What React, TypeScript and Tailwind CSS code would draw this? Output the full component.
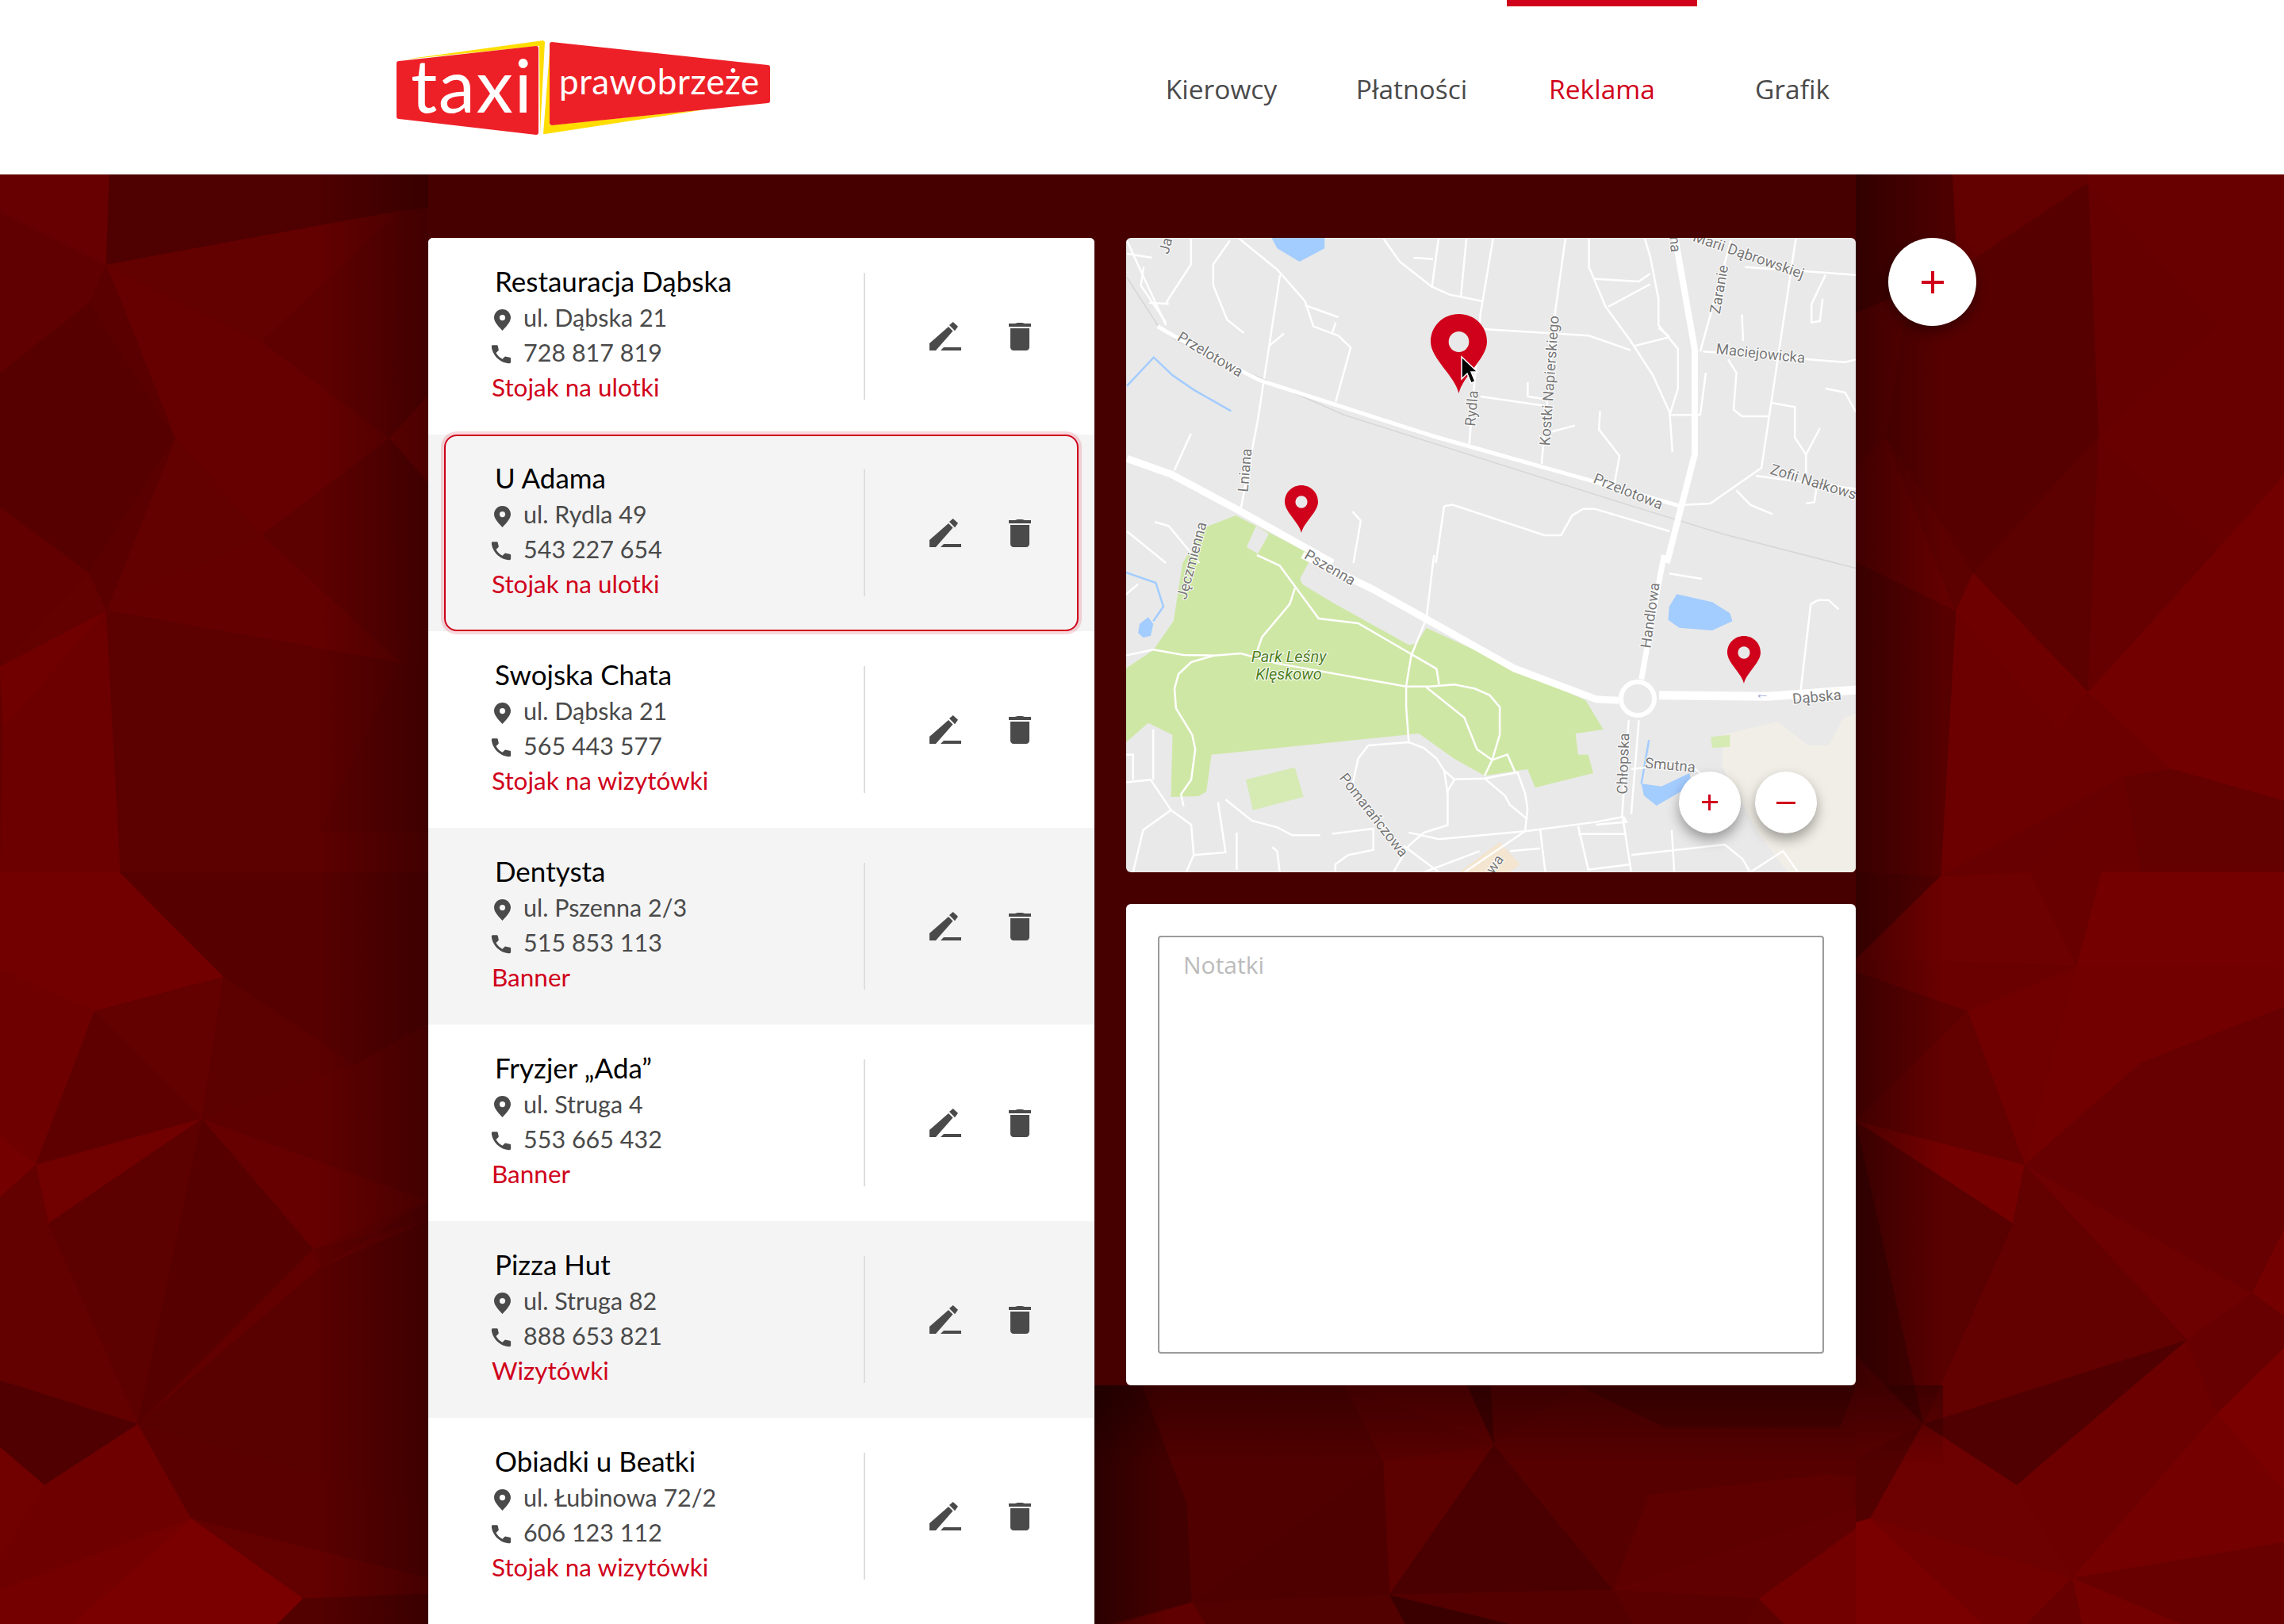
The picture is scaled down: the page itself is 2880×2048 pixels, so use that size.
const RED = "#d0021b";

type Place = { name: string; address: string; phone: string; tag: string };

const places: Place[] = [
  { name: "Restauracja Dąbska", address: "ul. Dąbska 21", phone: "728 817 819", tag: "Stojak na ulotki" },
  { name: "U Adama", address: "ul. Rydla 49", phone: "543 227 654", tag: "Stojak na ulotki" },
  { name: "Swojska Chata", address: "ul. Dąbska 21", phone: "565 443 577", tag: "Stojak na wizytówki" },
  { name: "Dentysta", address: "ul. Pszenna 2/3", phone: "515 853 113", tag: "Banner" },
  { name: "Fryzjer „Ada”", address: "ul. Struga 4", phone: "553 665 432", tag: "Banner" },
  { name: "Pizza Hut", address: "ul. Struga 82", phone: "888 653 821", tag: "Wizytówki" },
  { name: "Obiadki u Beatki", address: "ul. Łubinowa 72/2", phone: "606 123 112", tag: "Stojak na wizytówki" },
];

// low-poly backdrop, [fill, points] in page pixels
const facets: [string, string][] = [
  // top left
  ["#6a0000", "0,220 138,220 134,334 0,267"],
  ["#480000", "138,220 540,220 540,262 505,266 290,305 134,334"],
  ["#640000", "134,334 290,305 505,266 330,431"],
  ["#680000", "134,334 330,431 221,553"],
  ["#5e0000", "330,431 505,266 491,553"],
  ["#5c0000", "505,266 540,262 540,499 491,553"],
  ["#700000", "540,499 540,609 491,553"],
  ["#680000", "221,553 330,431 491,553 330,675"],
  ["#5c0000", "330,675 491,553 505,836"],
  ["#580000", "491,553 540,609 540,840 505,836"],
  ["#640000", "221,553 330,675 134,770"],
  ["#660000", "134,770 330,675 505,836"],
  ["#520000", "113,381 221,553 112,722 0,640 0,470"],
  ["#600000", "0,267 134,334 113,381 0,470"],
  ["#580000", "134,334 221,553 113,381"],
  ["#580000", "221,553 134,770 112,722"],
  ["#620000", "0,640 112,722 0,840"],
  ["#760000", "0,840 134,770 4,920"],
  ["#640000", "0,840 112,722 134,770"],
  ["#700000", "4,920 134,770 152,1100 0,1100"],
  ["#5a0000", "134,770 505,836 402,1050 152,1100"],
  ["#560000", "505,836 540,840 540,1050 402,1050"],
  ["#5c0000", "402,1050 540,1050 540,1100 152,1100"],
  // bottom left
  ["#7a0000", "0,1100 151,1100 282,1232 119,1275 0,1222"],
  ["#740000", "0,1222 119,1275 80,1378 45,1469 0,1433"],
  ["#640000", "119,1275 282,1232 255,1411"],
  ["#5e0000", "119,1275 255,1411 45,1469 80,1378"],
  ["#7c0000", "0,1433 45,1469 0,1510"],
  ["#780000", "45,1469 255,1411 61,1543"],
  ["#5a0000", "61,1543 255,1411 174,1796"],
  ["#520000", "255,1411 395,1575 174,1796"],
  ["#680000", "255,1411 540,1514 395,1575"],
  ["#5a0000", "282,1232 447,1343 255,1411"],
  ["#5e0000", "447,1343 540,1290 540,1514 255,1411"],
  ["#540000", "151,1100 540,1100 540,1290 447,1343 282,1232"],
  ["#5a0000", "395,1575 540,1540 540,1514 405,1598"],
  ["#560000", "405,1598 540,1540 540,1900 174,1796"],
  ["#640000", "0,1510 45,1469 61,1543 174,1796 0,1741"],
  ["#4a0000", "0,1741 174,1796 56,1873 0,1825"],
  ["#780000", "0,1825 56,1873 0,1965"],
  ["#740000", "56,1873 174,1796 241,1915 0,2005 0,1965"],
  ["#580000", "174,1796 540,1900 540,1990 241,1915"],
  ["#640000", "241,1915 540,1990 540,2010 382,2016"],
  ["#840000", "241,1915 382,2016 350,2048 90,2048"],
  ["#7c0000", "0,2005 241,1915 90,2048 0,2048"],
  ["#4e0000", "382,2016 540,2010 540,2048 350,2048"],
  // top right
  ["#440000", "2340,220 2462,220 2470,400 2340,395"],
  ["#640000", "2462,220 2633,220 2633,231 2470,340"],
  ["#6c0000", "2633,220 2880,220 2880,290 2796,411 2633,231"],
  ["#680000", "2633,231 2796,411 2646,552"],
  ["#540000", "2470,340 2633,231 2646,552 2378,551 2400,410"],
  ["#5c0000", "2340,395 2470,340 2400,410 2378,551 2340,590"],
  ["#540000", "2378,551 2646,552 2488,723"],
  ["#640000", "2340,590 2378,551 2466,771 2340,709"],
  ["#5a0000", "2378,551 2488,723 2466,771"],
  ["#5c0000", "2488,723 2646,552 2633,873"],
  ["#6c0000", "2646,552 2796,411 2880,290 2880,600 2796,693"],
  ["#680000", "2646,552 2796,693 2633,873"],
  ["#7a0000", "2796,693 2880,600 2880,820 2633,873"],
  ["#740000", "2466,771 2488,723 2633,873 2595,920"],
  ["#700000", "2466,771 2595,920 2447,1105"],
  ["#700000", "2595,920 2633,873 2738,970 2678,980 2447,1105"],
  ["#7a0000", "2633,873 2880,820 2880,1010 2738,970"],
  ["#520000", "2340,709 2466,771 2447,1105 2340,1100"],
  ["#6a0000", "2447,1105 2678,980 2560,1100"],
  ["#640000", "2678,980 2738,970 2880,1010 2880,1100 2700,1100"],
  ["#6c0000", "2560,1100 2678,980 2700,1100"],
  // bottom right
  ["#480000", "2340,1100 2447,1105 2340,1210"],
  ["#720000", "2447,1105 2560,1100 2619,1219 2340,1210"],
  ["#6c0000", "2560,1100 2650,1100 2619,1219"],
  ["#7c0000", "2650,1100 2880,1100 2880,1220 2619,1219"],
  ["#5a0000", "2340,1225 2481,1275 2340,1414"],
  ["#6e0000", "2340,1210 2619,1219 2481,1275 2340,1225"],
  ["#760000", "2481,1275 2619,1219 2553,1469"],
  ["#640000", "2481,1275 2553,1469 2340,1414"],
  ["#7a0000", "2619,1219 2880,1220 2880,1270 2700,1340 2553,1469"],
  ["#6a0000", "2700,1340 2880,1270 2880,1550 2840,1631 2553,1469"],
  ["#720000", "2553,1469 2840,1631 2758,1690"],
  ["#7c0000", "2340,1414 2553,1469 2538,1543"],
  ["#640000", "2553,1469 2758,1690 2538,1543"],
  ["#640000", "2538,1543 2758,1690 2425,1796"],
  ["#560000", "2340,1414 2538,1543 2425,1796"],
  ["#3e0000", "2340,1414 2425,1796 2340,1710"],
  ["#7c0000", "2840,1631 2880,1550 2880,1660"],
  ["#6a0000", "2758,1690 2840,1631 2880,1660 2880,1700 2795,1783"],
  ["#840000", "2795,1783 2880,1700 2880,1880"],
  ["#4a0000", "2425,1796 2758,1690 2543,1873"],
  ["#700000", "2543,1873 2758,1690 2795,1783 2613,1990"],
  ["#7c0000", "2613,1990 2795,1783 2880,1880 2880,1945"],
  ["#560000", "2340,1710 2425,1796 2340,1840"],
  ["#4e0000", "2340,1840 2425,1796 2358,1915 2340,1920"],
  ["#720000", "2425,1796 2543,1873 2613,1990 2358,1915"],
  ["#7a0000", "2358,1915 2613,1990 2555,2048 2500,2048"],
  ["#840000", "2340,1920 2358,1915 2500,2048 2340,2048"],
  ["#6c0000", "2613,1990 2880,1945 2880,2048 2750,2048"],
  ["#7c0000", "2613,1990 2750,2048 2625,2048"],
  ["#6a0000", "2555,2048 2613,1990 2625,2048"],
  // under the notes
  ["#3a0000", "1380,1747 1500,1747 1497,1897 1503,2021 1400,2048 1380,2048"],
  ["#4e0000", "1440,1747 1695,1747 1744,1843 1503,2021 1497,1897"],
  ["#580000", "1695,1747 1884,1822 1744,1843"],
  ["#380000", "1850,1747 1880,1747 1884,1822"],
  ["#520000", "1880,1747 1990,1747 1884,1822"],
  ["#5e0000", "1744,1843 1884,1822 1752,2011"],
  ["#4a0000", "1744,1843 1752,2011 1503,2021"],
  ["#440000", "1884,1822 2034,2005 1752,2011"],
  ["#560000", "1884,1822 1990,1747 2340,1747 2340,1862 2309,1859 2080,1885 2034,2005"],
  ["#420000", "1990,1747 2340,1747 2320,1800 2100,1800"],
  ["#600000", "2080,1885 2309,1859 2340,1900 2034,2005"],
  ["#640000", "2034,2005 2340,1900 2340,1928 2218,2016"],
  ["#7c0000", "2218,2016 2340,1928 2340,2048 2250,2048"],
  ["#500000", "1503,2021 1752,2011 1772,2048 1400,2048"],
  ["#2e0000", "1752,2011 1905,2048 1772,2048"],
  ["#520000", "1752,2011 2034,2005 2060,2048 1905,2048"],
  ["#5a0000", "2034,2005 2218,2016 2200,2048 2060,2048"],
  ["#620000", "1410,2048 1503,2021 1520,2048"],
];

// thin streets, traced off the north half of the map
const streetsNorth = [
  "M30 40 Q60 180 100 360", "M30 90 L75 105", "M60 140 L55 210 L100 350", "M145 30 L145 130 L105 260 L100 280", "M70 275 L105 280",
  "M230 30 L300 150 L350 270 L365 365 L410 400 L432 445 L405 650", "M215 40 L185 130 L185 210 L210 340 L240 390",
  "M305 170 L265 720 L235 1050", "M350 285 L410 330", "M405 350 L398 395", "M312 392 L285 440",
  "M490 30 L520 120 L578 215 L610 245 L670 270", "M545 105 L580 110", "M590 30 L578 215", "M640 30 L630 250", "M688 30 L665 320 L645 810",
  "M818 30 L800 300 L775 885", "M670 375 L860 400 L935 455", "M860 30 L860 140 L890 290 L935 420 L975 550 L1005 690 L1010 840",
  "M960 30 L970 100 L985 260 L985 360 L1020 450 L1020 600 L1005 700 L1060 700", "M870 185 L950 195 L970 165", "M970 205 L895 290",
  "M940 440 L1005 405", "M985 370 L1005 405", "M665 630 L780 665", "M750 575 L750 630 L780 640", "M790 765 L835 740",
  "M880 685 L878 755 L915 855 L905 970", "M1115 40 L1060 460", "M1140 140 L1340 170", "M1285 170 L1260 280 L1260 350 L1275 345 L1280 260",
  "M1135 320 L1137 420", "M1232 30 L1170 900 L1078 1035 L1030 1040", "M1065 460 L1320 500 L1340 490", "M1110 490 L1125 540 L1120 680 L1135 705 L1185 705",
  "M1285 600 L1320 615 L1340 690", "M1190 655 L1230 670 L1230 785 L1250 850 L1250 940", "M1275 750 L1250 850", "M1160 930 L1340 980",
  "M1125 985 L1150 1040 L1190 1075", "M1270 965 L1265 1030 L1250 1035", "M145 770 L115 910", "M80 1105 L105 1120 L160 1260", "M30 1140 L100 1260",
  "M600 1045 L585 1260", "M600 1045 L615 1040 L780 1155 L810 1155 L830 1080 L850 1055 L870 1055 L1005 1140", "M435 1065 L450 1100 L437 1260", "M1070 540 L1060 700",
];

// same for the south half
const streetsSouth = [
  "M290 0 L335 40 L412 240 L490 258 L645 430 L650 490", "M365 125 L355 185 L300 310 L290 365 L330 410 L585 497 L630 497 L680 490 L720 505 L750 530 L770 575 L770 680 L755 775 L740 835",
  "M85 358 L145 378 L205 380 L258 372 L330 410", "M205 380 L160 405 L135 450 L127 505 L130 580 L162 680 L168 735 L160 850 L140 905 L145 950",
  "M640 0 L625 240 L595 380 L585 495 L585 575 L590 705", "M625 500 L700 615 L725 735 L755 775 L785 755 L800 820",
  "M510 720 L590 708 L620 730 L645 770 L660 815 L680 848 L740 845 L805 822 L820 900 L825 960 L820 1045", "M510 720 L490 770 L480 860",
  "M660 815 L667 900 L667 1022 L620 1050 L590 1100 L560 1200", "M680 850 L665 900", "M740 845 L780 910 L790 945 L825 1000",
  "M30 860 L80 850 L120 965 L160 1020 L165 1135 L150 1200", "M120 965 L65 1040 L45 1200", "M30 755 L45 755 L45 850", "M85 660 L85 850",
  "M165 1135 L228 1125 L213 935", "M250 1050 L250 1190", "M320 1105 L330 1120 L335 1200", "M228 925 L280 1005 L330 1030 L360 1060 L415 1060",
  "M438 1055 L520 1035 L520 1115 L470 1135 L445 1170 L445 1200", "M580 1100 L650 1200", "M620 1200 L730 1120", "M590 1050 L650 1075 L820 1045 L960 1010 L1015 990",
  "M820 1045 L700 1200", "M850 1040 L860 1200", "M790 1120 L850 1110", "M925 1025 L945 1190 L1030 1170", "M925 1055 L1020 1055", "M1030 1135 L1215 1095 L1250 1150 L1265 1200",
  "M1110 1040 L1115 1200", "M1265 1200 L1330 1120 L1360 1200", "M1015 990 L1020 1010 L960 1020", "M1025 625 L1012 980 L1030 1200", "M1045 625 L1030 980",
  "M1030 810 L1120 790 L1150 800 L1170 830", "M1385 185 L1365 510", "M1385 185 L1400 170 L1420 170 L1440 205", "M1105 70 L1170 90", "M30 150 L55 110", "M30 380 L85 358",
];

const mapLabels: [string, number, number, number][] = [
  ["Przelotowa", 1526, 447, 31],
  ["Przelotowa", 2053, 620, 22],
  ["Rydla", 1856, 515, -85],
  ["Kostki Napierskiego", 1954, 480, -86],
  ["Lniana", 1570, 593, -85],
  ["Maciejowicka", 2220, 446, 6],
  ["Zaranie", 2168, 365, -80],
  ["Pszenna", 1677, 716, 30],
  ["Jęczmienna", 1503, 707, -75],
  ["Handlowa", 2081, 776, -82],
  ["Dąbska", 2291, 879, -5],
  ["Chłopska", 2047, 963, -88],
  ["Smutna", 2106, 965, 5],
  ["Pomarańczowa", 1732, 1028, 52],
  ["wa", 1885, 1090, -55],
  ["Ja", 1470, 310, -75],
  ["na", 2112, 308, 85],
  ["Zofii Nałkowskiej", 2300, 612, 17],
  ["Marii Dąbrowskiej", 2205, 322, 19],
];

const Pin = ({ x, y, w, h }: { x: number; y: number; w: number; h: number }) => (
  <svg x={x} y={y} width={w} height={h} viewBox="0 0 72 100" preserveAspectRatio="none">
    <path d="M36 100C31 78 0 56 0 35C0 15 16 0 36 0S72 15 72 35C72 56 41 78 36 100Z" fill={RED} />
    <circle cx="36" cy="35" r="13" fill="#e9e9e9" />
  </svg>
);

const MapDrawing = () => (
  <svg className="block" width="920" height="800" viewBox="1420 300 920 800">
    <rect x="1420" y="300" width="920" height="800" fill="#e9e9e9" />
    <g transform="translate(1400 700) scale(0.6378 0.3333)">
      <polygon fill="#f0eee6" points="1210,680 1320,630 1380,720 1420,720 1450,615 1475,600 1475,1200 1340,1200 1280,1050 1210,800" />
      <polygon fill="#cfe7a5" points="248,-150 400,0 375,90 380,110 440,180 590,340 605,335 625,275 800,430 940,550 975,660 920,675 925,755 945,755 955,825 840,880 825,810 740,835 680,770 610,675 200,755 190,895 175,912 120,915 123,680 75,635 30,710 30,430 85,360 125,250 143,30 187,-105" />
      <polygon fill="#d6eab4" points="268,850 365,803 382,915 282,965" />
      <polygon fill="#d6eab4" points="1187,688 1225,680 1225,725 1190,730" />
      <polygon fill="#f3e5cf" points="690,1200 770,1085 810,1170 790,1200" />
      <polygon fill="#a3ccff" points="1120,148 1190,178 1225,220 1230,250 1190,285 1125,275 1103,245 1105,195" />
      <polygon fill="#a3ccff" points="75,235 85,260 80,305 65,312 55,295 58,260" />
      <polygon fill="#a3ccff" points="1050,865 1090,875 1145,825 1150,870 1080,948 1055,910" />
      <g fill="none" stroke="#a3ccff" strokeWidth="2.5">
        <path d="M30 65 L90 105 L105 195 L85 250" vectorEffect="non-scaling-stroke" />
        <path d="M1065 700 L1050 865" vectorEffect="non-scaling-stroke" />
      </g>
      <g fill="none" stroke="#fff" strokeWidth="2.5">
        {streetsSouth.map((d) => (
          <path key={d} d={d} vectorEffect="non-scaling-stroke" />
        ))}
      </g>
      <g fill="none" stroke="#fff" strokeLinejoin="round">
        <path d="M380 0 L520 130 L800 430 L960 545 L1005 550" strokeWidth="9" vectorEffect="non-scaling-stroke" />
        <path d="M1095 0 L1075 200 L1050 470" strokeWidth="7" vectorEffect="non-scaling-stroke" />
        <path d="M1085 530 L1300 535 L1475 510" strokeWidth="11" vectorEffect="non-scaling-stroke" />
      </g>
    </g>
    <g transform="translate(1400 290) scale(0.7018 0.3333)">
      <polygon fill="#a3ccff" points="290,30 385,30 385,70 340,120 300,70" />
      <path d="M30 590 L78 482 L112 550 L150 605 L217 685" fill="none" stroke="#a3ccff" strokeWidth="2.5" vectorEffect="non-scaling-stroke" />
      <polygon fill="#e9e9e9" points="262,1120 285,1150 265,1225 245,1200" />
      <g fill="none" stroke="#fff" strokeWidth="2.5">
        {streetsNorth.map((d) => (
          <path key={d} d={d} vectorEffect="non-scaling-stroke" />
        ))}
      </g>
      <path d="M30 180 L85 360 L120 420 L420 700 L930 1040 L1100 1150 L1340 1280" fill="none" stroke="#d6d6d6" strokeWidth="1.5" vectorEffect="non-scaling-stroke" />
      <g fill="none" stroke="#fff" strokeLinejoin="round">
        <path d="M85 365 L130 420 L270 570 L580 780 L900 970 L1025 1045" strokeWidth="5" vectorEffect="non-scaling-stroke" />
        <path d="M1015 30 L1050 450 L1050 850 L1000 1260" strokeWidth="8" vectorEffect="non-scaling-stroke" />
        <path d="M30 865 L110 925 L230 1060 L400 1260" strokeWidth="9" vectorEffect="non-scaling-stroke" />
      </g>
    </g>
    <circle cx="2065" cy="881" r="21" fill="#e9e9e9" stroke="#fff" strokeWidth="6" />
    <g fontFamily="Roboto, sans-serif" fontSize="18.5" fill="#777" textAnchor="middle" stroke="#fff" strokeWidth="2" paintOrder="stroke">
      {mapLabels.map(([text, x, y, angle]) => (
        <text key={text + x} x={x} y={y + 6} transform={`rotate(${angle} ${x} ${y})`}>
          {text}
        </text>
      ))}
      <text x="1625" y="835" fill="#4f7f1e" fontStyle="italic" fontSize="20">Park Leśny</text>
      <text x="1625" y="857" fill="#4f7f1e" fontStyle="italic" fontSize="20">Klęskowo</text>
      <text x="2222" y="881" fill="#a3a9d0" stroke="none">←</text>
    </g>
    <Pin x={1804} y={396} w={71} h={100} />
    <Pin x={1620} y={612} w={42} h={60} />
    <Pin x={2178} y={802} w={42} h={60} />
    <path d="M1843 450V478L1850 471L1855 483L1860 481L1855 469L1863 469Z" fill="#000" stroke="#fff" strokeWidth="1.5" />
  </svg>
);

const Logo = () => (
  <svg width="480" height="125" viewBox="495 48 480 125" className="block">
    <polygon fill="#ffdd00" points="510,75 685,51 687,53 681,168 680,58" />
    <polygon fill="#ffdd00" points="685,169 693,65 693,158 890,138 687,169" />
    <path d="M503 77L676 58Q679 58 679 61V167Q679 170 676 170L503 150Q500 150 500 147V80Q500 77 503 77Z" fill="#ee2027" />
    <path d="M696 53L968 82Q971 82 971 85V127Q971 130 968 130L696 158Q693 158 693 155V56Q693 53 696 53Z" fill="#ee2027" />
    <text x="518" y="142" fill="#fff" fontFamily="Lato, sans-serif" fontSize="93" letterSpacing="1.5">taxi</text>
    <text x="705" y="119" fill="#fff" fontFamily="Lato, sans-serif" fontSize="44" letterSpacing="0.5">prawobrzeże</text>
  </svg>
);

const EditIcon = () => (
  <svg width="40" height="36" viewBox="0 0 40 36" fill="#4a4a4a">
    <polygon points="0,36 0,27 24,6 29.5,11.5 8,36" />
    <polygon points="25,4 29.7,0 36,5.7 32,11.3" />
    <polygon points="14,36 18,32 40,32 40,36" />
  </svg>
);

const TrashIcon = () => (
  <svg width="28" height="36" viewBox="0 0 28 36" fill="#4a4a4a">
    <path d="M8 2C9 .5 19 .5 20 2H28V6H0V2Z" />
    <path d="M2 8H26V32C26 34.2 24.2 36 22 36H6C3.8 36 2 34.2 2 32Z" />
  </svg>
);

const PinIcon = () => (
  <svg width="21" height="27" viewBox="0 0 21 27" fill="#4a4a4a" className="ml-[3px] mt-[6px]">
    <path fillRule="evenodd" d="M10.5 0C16.3 0 21 4.7 21 10.5C21 17 13 24 10.5 27C8 24 0 17 0 10.5C0 4.7 4.7 0 10.5 0ZM10.5 7A3.6 3.6 0 1 0 10.5 14.2A3.6 3.6 0 1 0 10.5 7Z" />
  </svg>
);

const PhoneIcon = () => (
  <svg width="26" height="25" viewBox="0 0 24 24" fill="#4a4a4a" preserveAspectRatio="none" className="ml-[-1px] mt-[4px]">
    <path d="M6.6 1.2L2 1.2C1 1.2.8 2 .8 3C1.5 13 10.5 22.5 21 23.2C22.2 23.2 23.2 22.8 23.2 21.8V17.4C23.2 16.6 22.8 16.2 22 16L17.5 15C16.9 14.8 16.4 15 16 15.4L13.4 18C10.3 16.4 7.6 13.7 6 10.6L8.6 8C9 7.6 9.2 7.1 9 6.5L8 2C7.8 1.5 7.4 1.2 6.6 1.2Z" />
  </svg>
);

const PlaceRow = ({ place, index }: { place: Place; index: number }) => {
  const selected = index === 1;

  return (
    <div className={`relative flex h-[248px] items-center pl-[80px] ${index % 2 === 1 ? "bg-[#f4f4f4]" : "bg-white"}`}>
      {selected && (
        <div className="absolute inset-y-0 left-[20px] right-[20px] z-10 rounded-[16px] border-2 border-[#d0021b] shadow-[0_0_0_4px_rgba(208,2,27,0.15)]" />
      )}
      <div className="mb-[4px] w-[469px] text-[30.5px] leading-[44px] text-[#4a4a4a]">
        <p className="-mt-[2px] mb-[2px] pl-[4px] text-[35px] text-black">{place.name}</p>
        <p className="flex items-center">
          <span className="flex w-[40px] items-center"><PinIcon /></span>
          {place.address}
        </p>
        <p className="flex items-center">
          <span className="flex w-[40px] items-center"><PhoneIcon /></span>
          {place.phone}
        </p>
        <p className="text-[31.5px] text-[#d0021b]">{place.tag}</p>
      </div>
      <div className="h-[160px] w-[2px] bg-[#dedede]" />
      <div className="ml-[81px] flex items-center gap-[60px]">
        <EditIcon />
        <TrashIcon />
      </div>
    </div>
  );
};

const RoundButton = ({ size, children }: { size: string; children: React.ReactNode }) => (
  <button className={`flex items-center justify-center rounded-full bg-white shadow-[0_8px_16px_rgba(0,0,0,0.35)] ${size}`}>
    {children}
  </button>
);

const App = () => {
  const nav = ["Kierowcy", "Płatności", "Reklama", "Grafik"];

  return (
    <div className="relative h-[2048px] w-[2880px] overflow-hidden bg-[#460000] font-[family-name:Lato]">
      {/* backdrop */}
      <svg className="absolute inset-0" width="2880" height="2048" viewBox="0 0 2880 2048">
        <defs>
          <linearGradient id="shadeLeft" x1="0" x2="1" y1="0" y2="0">
            <stop offset="0" stopColor="#000" stopOpacity="0" />
            <stop offset="1" stopColor="#000" stopOpacity="0.3" />
          </linearGradient>
          <linearGradient id="shadeRight" x1="0" x2="1" y1="0" y2="0">
            <stop offset="0" stopColor="#000" stopOpacity="0.35" />
            <stop offset="1" stopColor="#000" stopOpacity="0" />
          </linearGradient>
          <linearGradient id="shadeDown" x1="0" x2="0" y1="0" y2="1">
            <stop offset="0" stopColor="#000" stopOpacity="0.3" />
            <stop offset="1" stopColor="#000" stopOpacity="0" />
          </linearGradient>
        </defs>
        <rect x="0" y="220" width="540" height="1828" fill="#620000" />
        <rect x="2340" y="220" width="540" height="1828" fill="#620000" />
        <rect x="1380" y="1747" width="960" height="301" fill="#5c0000" />
        <g opacity="0.72">
          {facets.map(([fill, points]) => (
            <polygon key={points} fill={fill} stroke={fill} strokeWidth="0.5" points={points} />
          ))}
        </g>
        <rect x="400" y="220" width="140" height="1828" fill="url(#shadeLeft)" />
        <rect x="2340" y="220" width="110" height="1527" fill="url(#shadeRight)" />
        <rect x="1380" y="1747" width="90" height="301" fill="url(#shadeRight)" />
        <rect x="1380" y="1747" width="1070" height="100" fill="url(#shadeDown)" />
      </svg>

      {/* header */}
      <header className="relative flex h-[220px] bg-white pl-[495px]">
        <div className="pt-[48px]"><Logo /></div>
        <nav className="ml-[445px] flex font-[family-name:'Open_Sans'] text-[33.5px]">
          {nav.map((item) => (
            <a
              key={item}
              className={`flex w-[240px] items-center justify-center border-t-[8px] pb-[4px] ${item === "Reklama" ? "border-[#d0021b] text-[#d0021b]" : "border-transparent text-[#4a4a4a]"}`}
            >
              {item}
            </a>
          ))}
        </nav>
      </header>

      <main className="relative flex items-start pl-[540px] pt-[80px]">
        <div className="w-[840px] overflow-hidden rounded-t-[6px] bg-white pb-[40px]">
          {places.map((place, i) => (
            <PlaceRow key={place.name} place={place} index={i} />
          ))}
        </div>

        <div className="ml-[40px] flex w-[920px] flex-col gap-[40px]">
          <div className="relative h-[800px] overflow-hidden rounded-[6px]">
            <MapDrawing />
            <div className="absolute bottom-[49px] right-[49px] flex gap-[18px]">
              <RoundButton size="h-[78px] w-[78px]">
                <span className="relative block h-[20px] w-[20px]">
                  <span className="absolute left-0 top-[8px] h-[3px] w-[20px] bg-[#d0021b]" />
                  <span className="absolute left-[8px] top-0 h-[20px] w-[3px] bg-[#d0021b]" />
                </span>
              </RoundButton>
              <RoundButton size="h-[78px] w-[78px]">
                <span className="block h-[3px] w-[24px] bg-[#d0021b]" />
              </RoundButton>
            </div>
          </div>

          <div className="rounded-[6px] bg-white p-[40px]">
            <textarea
              placeholder="Notatki"
              className="block h-[527px] w-full resize-none rounded-[4px] border-2 border-[#9b9b9b] px-[30px] py-[14px] font-[family-name:'Open_Sans'] text-[30px] leading-[42px] outline-none placeholder:text-[#bbbbbb]"
            />
          </div>
        </div>

        <div className="ml-[41px]">
          <RoundButton size="h-[111px] w-[111px]">
            <span className="relative block h-[28px] w-[28px]">
              <span className="absolute left-0 top-[12px] h-[4px] w-[28px] bg-[#d0021b]" />
              <span className="absolute left-[12px] top-0 h-[28px] w-[4px] bg-[#d0021b]" />
            </span>
          </RoundButton>
        </div>
      </main>
    </div>
  );
};

export default App;
